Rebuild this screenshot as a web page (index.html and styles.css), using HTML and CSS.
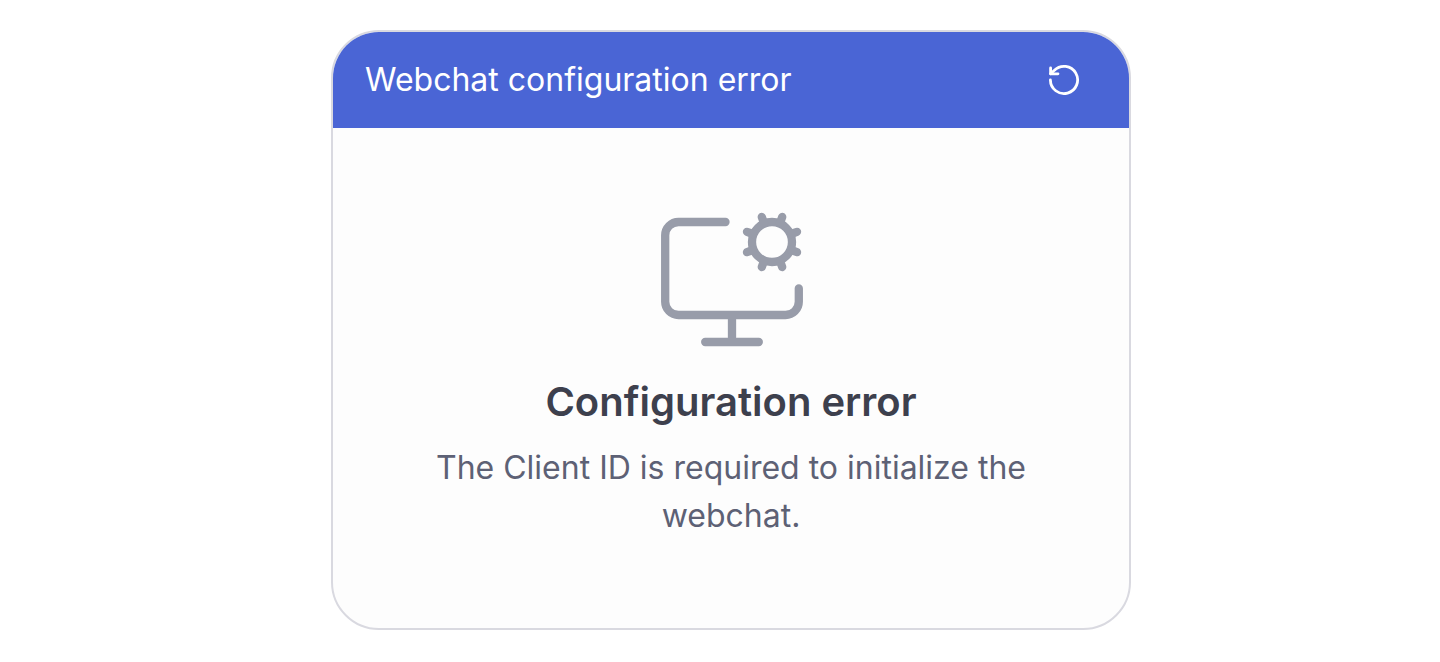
FILE: index.html
```
<!DOCTYPE html>
<html lang="en">
<head>
    <meta charset="UTF-8">
    <meta name="viewport" content="width=device-width, initial-scale=1.0">
    <title>Webchat configuration error</title>
    <link rel="stylesheet" href="styles.css">
</head>
<body>
    <main class="webchat">
        <header class="webchat-header">
            <h1>Webchat configuration error</h1>
            <button class="reload-btn" type="button" aria-label="Reload">
                <svg viewBox="0 0 32 32" aria-hidden="true">
                    <path d="M1.4 16A13.6 13.6 0 1 0 5.4 6.3L1.6 9.8"/>
                    <path d="M1.6 4V9.8H9"/>
                </svg>
            </button>
        </header>
        <section class="webchat-body">
            <svg class="error-icon" viewBox="0 0 144 136" aria-hidden="true">
                <path d="M66.5 10H19.5A13.3 13.3 0 0 0 6.2 23.3V89.7A13.3 13.3 0 0 0 19.5 103H126.5A13.3 13.3 0 0 0 139.8 89.7V76.5M73 103V130M46.2 130H99.8"/>
                <circle cx="113" cy="30" r="20"/>
                <path d="M105 11L102.8 5M121 11L123.2 5M132 22L138 19.8M132 38L138 40.2M121 49L123.2 55M105 49L102.8 55M94 38L88 40.2M94 22L88 19.8"/>
            </svg>
            <h2>Configuration error</h2>
            <p>The Client ID is required to initialize the webchat.</p>
        </section>
    </main>
</body>
</html>
```
FILE: styles.css
```
* {
    box-sizing: border-box;
}
body {
    font-family: Inter, "Liberation Sans", sans-serif;
    background: #fff;
    margin: 0;
    padding: 30px 20px 32px 42px;
    min-height: 100vh;
    display: flex;
    justify-content: center;
}
.webchat {
    width: 100%;
    max-width: 800px;
    display: flex;
    flex-direction: column;
    background: #fdfdfd;
    border: 2px solid #d9d9e0;
    border-radius: 48px;
    overflow: hidden;
}
.webchat-header {
    display: flex;
    align-items: center;
    justify-content: space-between;
    padding: 24px 48px 24px 32px;
    background: #4a65d5;
    color: #fff;
}
h1 {
    margin: 0;
    font-size: 32px;
    font-weight: 400;
    line-height: 48px;
}
.reload-btn {
    width: 32px;
    height: 32px;
    padding: 0;
    border: none;
    background: none;
    color: inherit;
    cursor: pointer;
}
svg {
    display: block;
    fill: none;
    stroke: currentColor;
    stroke-linecap: round;
    stroke-linejoin: round;
}
.reload-btn svg {
    width: 32px;
    height: 32px;
    stroke-width: 2.8;
}
.webchat-body {
    flex: 1;
    display: flex;
    flex-direction: column;
    align-items: center;
    padding: 84px 64px;
    text-align: center;
}
.error-icon {
    width: 144px;
    height: 136px;
    color: #989ca9;
    stroke-width: 8.3;
}
h2 {
    margin: 24px 0 12px;
    font-size: 40px;
    font-weight: 600;
    line-height: 60px;
    color: #3d404d;
}
p {
    margin: 0;
    font-size: 32px;
    line-height: 48px;
    color: #5d6175;
}
```
